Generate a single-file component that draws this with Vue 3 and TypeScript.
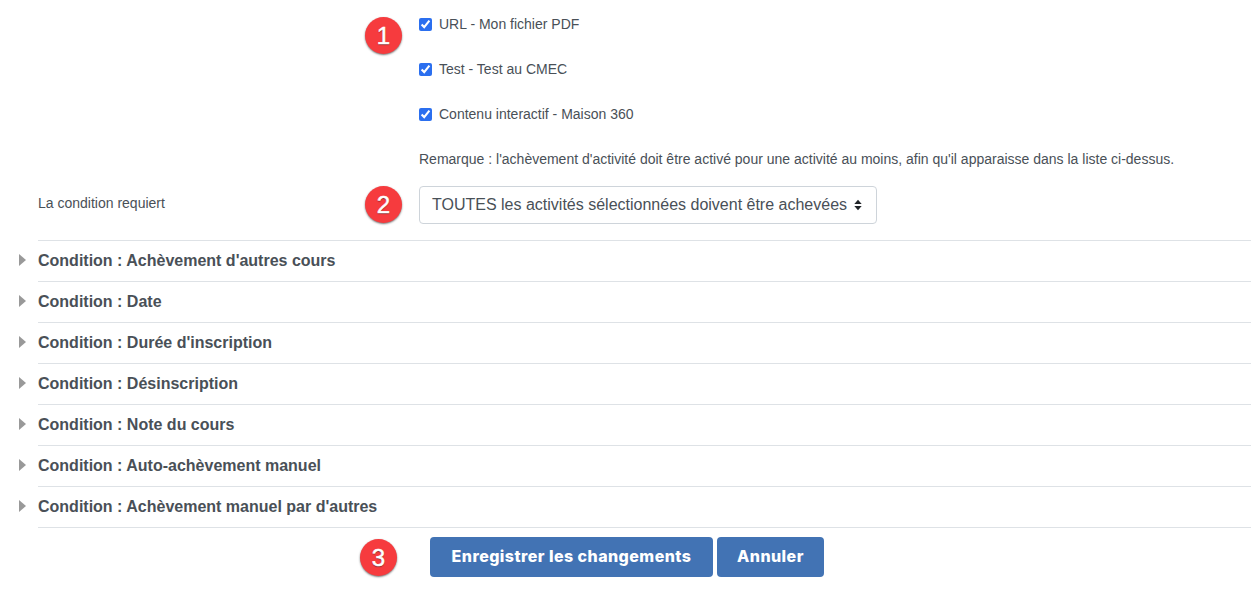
<script setup lang="ts">
interface Activity {
  id: string
  label: string
}

const activities: Activity[] = [
  { id: 'url', label: 'URL - Mon fichier PDF' },
  { id: 'test', label: 'Test - Test au CMEC' },
  { id: 'maison', label: 'Contenu interactif - Maison 360' },
]

const conditions: string[] = [
  "Condition : Achèvement d'autres cours",
  'Condition : Date',
  "Condition : Durée d'inscription",
  'Condition : Désinscription',
  'Condition : Note du cours',
  'Condition : Auto-achèvement manuel',
  "Condition : Achèvement manuel par d'autres",
]
</script>

<template>
  <main class="page">
    <section class="activities">
      <span class="badge badge-one">1</span>
      <label v-for="item in activities" :key="item.id" class="check-row">
        <input type="checkbox" class="check" checked />
        <span>{{ item.label }}</span>
      </label>
      <p class="note">
        Remarque : l'achèvement d'activité doit être activé pour une activité au moins, afin qu'il apparaisse dans la liste ci-dessus.
      </p>
    </section>

    <section class="require-row">
      <span class="require-label">La condition requiert</span>
      <span class="badge badge-two">2</span>
      <div class="select">
        <span>TOUTES les activités sélectionnées doivent être achevées</span>
        <svg class="select-arrows" width="8" height="12" viewBox="0 0 8 12" aria-hidden="true">
          <path d="M4 .8 7.7 5H.3zM4 11.2.3 7h7.4z" fill="#212529" />
        </svg>
      </div>
    </section>

    <ul class="conditions">
      <li v-for="title in conditions" :key="title" class="condition">
        <svg class="caret" width="8" height="12" viewBox="0 0 8 12" aria-hidden="true">
          <path d="M0 0 7 6 0 12z" fill="#999" />
        </svg>
        <h3>{{ title }}</h3>
      </li>
    </ul>

    <footer class="actions">
      <span class="badge badge-three">3</span>
      <button type="button" class="btn btn-save">Enregistrer les changements</button>
      <button type="button" class="btn">Annuler</button>
    </footer>
  </main>
</template>

<style>
html,
body {
  margin: 0;
  background: #fff;
}
</style>

<style scoped>
.page {
  height: 602px;
  overflow: hidden;
  font-family: "Liberation Sans", Arial, sans-serif;
  font-size: 14px;
  color: #495057;
}

.badge {
  position: absolute;
  width: 37px;
  height: 37px;
  border-radius: 50%;
  background: #f63b3e;
  box-shadow: 0 1px 2px rgba(60, 60, 60, 0.7);
  color: #fff;
  font-size: 24px;
  line-height: 37px;
  text-align: center;
  -webkit-text-stroke: 0.5px #fff;
  text-shadow: 0 1px 1px rgba(0, 0, 0, 0.5);
}

.badge-one {
  left: 365px;
  top: 17px;
}

.badge-two {
  left: 365px;
  top: 0;
}

.badge-three {
  left: 360px;
  top: 2px;
}

.activities {
  position: relative;
  padding: 13px 0 0 419px;
}

.check-row {
  display: flex;
  align-items: center;
  gap: 7px;
  height: 22px;
  margin-bottom: 23px;
}

.check {
  width: 13px;
  height: 13px;
  margin: 0;
  accent-color: #2b6fef;
}

.note {
  margin: 0;
  height: 22px;
  line-height: 22px;
  white-space: nowrap;
}

.require-row {
  position: relative;
  display: flex;
  align-items: center;
  height: 38px;
  margin-top: 16px;
  padding-left: 38px;
}

.require-label {
  width: 381px;
  margin-top: -4px;
}

.select {
  box-sizing: border-box;
  display: flex;
  align-items: center;
  justify-content: space-between;
  width: 458px;
  height: 38px;
  padding: 0 14px 0 12px;
  border: 1px solid #ced4da;
  border-radius: 4px;
  font-size: 16px;
  white-space: nowrap;
}

.select-arrows {
  flex: none;
}

.conditions {
  list-style: none;
  margin: 16px 0 0;
  padding: 0 0 0 38px;
}

.condition {
  position: relative;
  display: flex;
  align-items: center;
  height: 40px;
  border-top: 1px solid #dee2e6;
}

.condition:last-child {
  border-bottom: 1px solid #dee2e6;
}

.condition h3 {
  margin: 0;
  font-size: 16px;
  font-weight: 700;
  color: #495057;
}

.caret {
  position: absolute;
  left: -19px;
  top: 13px;
}

.actions {
  position: relative;
  display: flex;
  gap: 4px;
  margin-top: 9px;
  padding-left: 430px;
}

.btn {
  height: 40px;
  padding: 0 20px 2px;
  border: 0;
  border-radius: 4px;
  background: #4273b4;
  color: #fff;
  font-family: Inter, "Liberation Sans", sans-serif;
  font-size: 16px;
  font-weight: 800;
  letter-spacing: 0.45px;
  white-space: nowrap;
}

.btn-save {
  width: 283px;
  padding: 0 0 2px;
}
</style>
